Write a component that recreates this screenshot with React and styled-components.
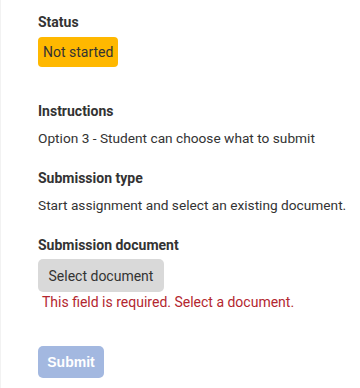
import React from 'react'
import styled, { createGlobalStyle } from 'styled-components'

const Global = createGlobalStyle`
    body {
        margin: 0;
        background: #fff;
        font-family: Roboto, "Noto Sans", sans-serif;
        color: #333;
    }
`

const Panel = styled.div`
    display: flex;
    flex-direction: column;
    padding: 13px 0 0 37px;
    height: 388px;
    box-sizing: border-box;
    border-left: 1px solid #f2f2f2;
`

const Section = styled.div`
    display: flex;
    flex-direction: column;
    align-items: flex-start;
    margin-bottom: ${props => props.gap || "0"};
`

const Label = styled.h3`
    margin: 0 0 ${props => props.below || "9px"} 0;
    font-size: 14px;
    font-weight: 700;
    line-height: 18px;
    color: #333;
`

const Text = styled.p`
    margin: 0;
    font-size: 13.7px;
    line-height: 18px;
    color: #333;
`

const Badge = styled.span`
    display: inline-flex;
    align-items: center;
    height: 30px;
    padding: 0 5px;
    background: #ffb800;
    border-radius: 4px;
    font-size: 14px;
    color: #333;
`

const SelectButton = styled.button`
    height: 33px;
    width: 126px;
    border: none;
    border-radius: 5px;
    background: #d9d9d9;
    font-family: inherit;
    font-size: 14px;
    color: #333;
    padding: 0;
`

const ErrorText = styled.div`
    margin: 1px 0 0 4px;
    font-size: 14px;
    line-height: 18px;
    color: #b3262f;
`

const SubmitButton = styled.button`
    height: 32px;
    width: 66px;
    border: none;
    border-radius: 5px;
    background: #a3b8e0;
    color: #fff;
    font-family: "Liberation Sans", Arial, sans-serif;
    font-weight: 700;
    font-size: 14px;
    padding: 0;
`

export default function App() {
    return (
        <Panel>
            <Global />
            <Section gap="35px">
                <Label below="6px">Status</Label>
                <Badge>Not started</Badge>
            </Section>
            <Section gap="22px">
                <Label>Instructions</Label>
                <Text>Option 3 - Student can choose what to submit</Text>
            </Section>
            <Section gap="22px">
                <Label>Submission type</Label>
                <Text>Start assignment and select an existing document.</Text>
            </Section>
            <Section gap="35px">
                <Label below="5px">Submission document</Label>
                <SelectButton>Select document</SelectButton>
                <ErrorText>This field is required. Select a document.</ErrorText>
            </Section>
            <Section>
                <SubmitButton>Submit</SubmitButton>
            </Section>
        </Panel>
    )
}
